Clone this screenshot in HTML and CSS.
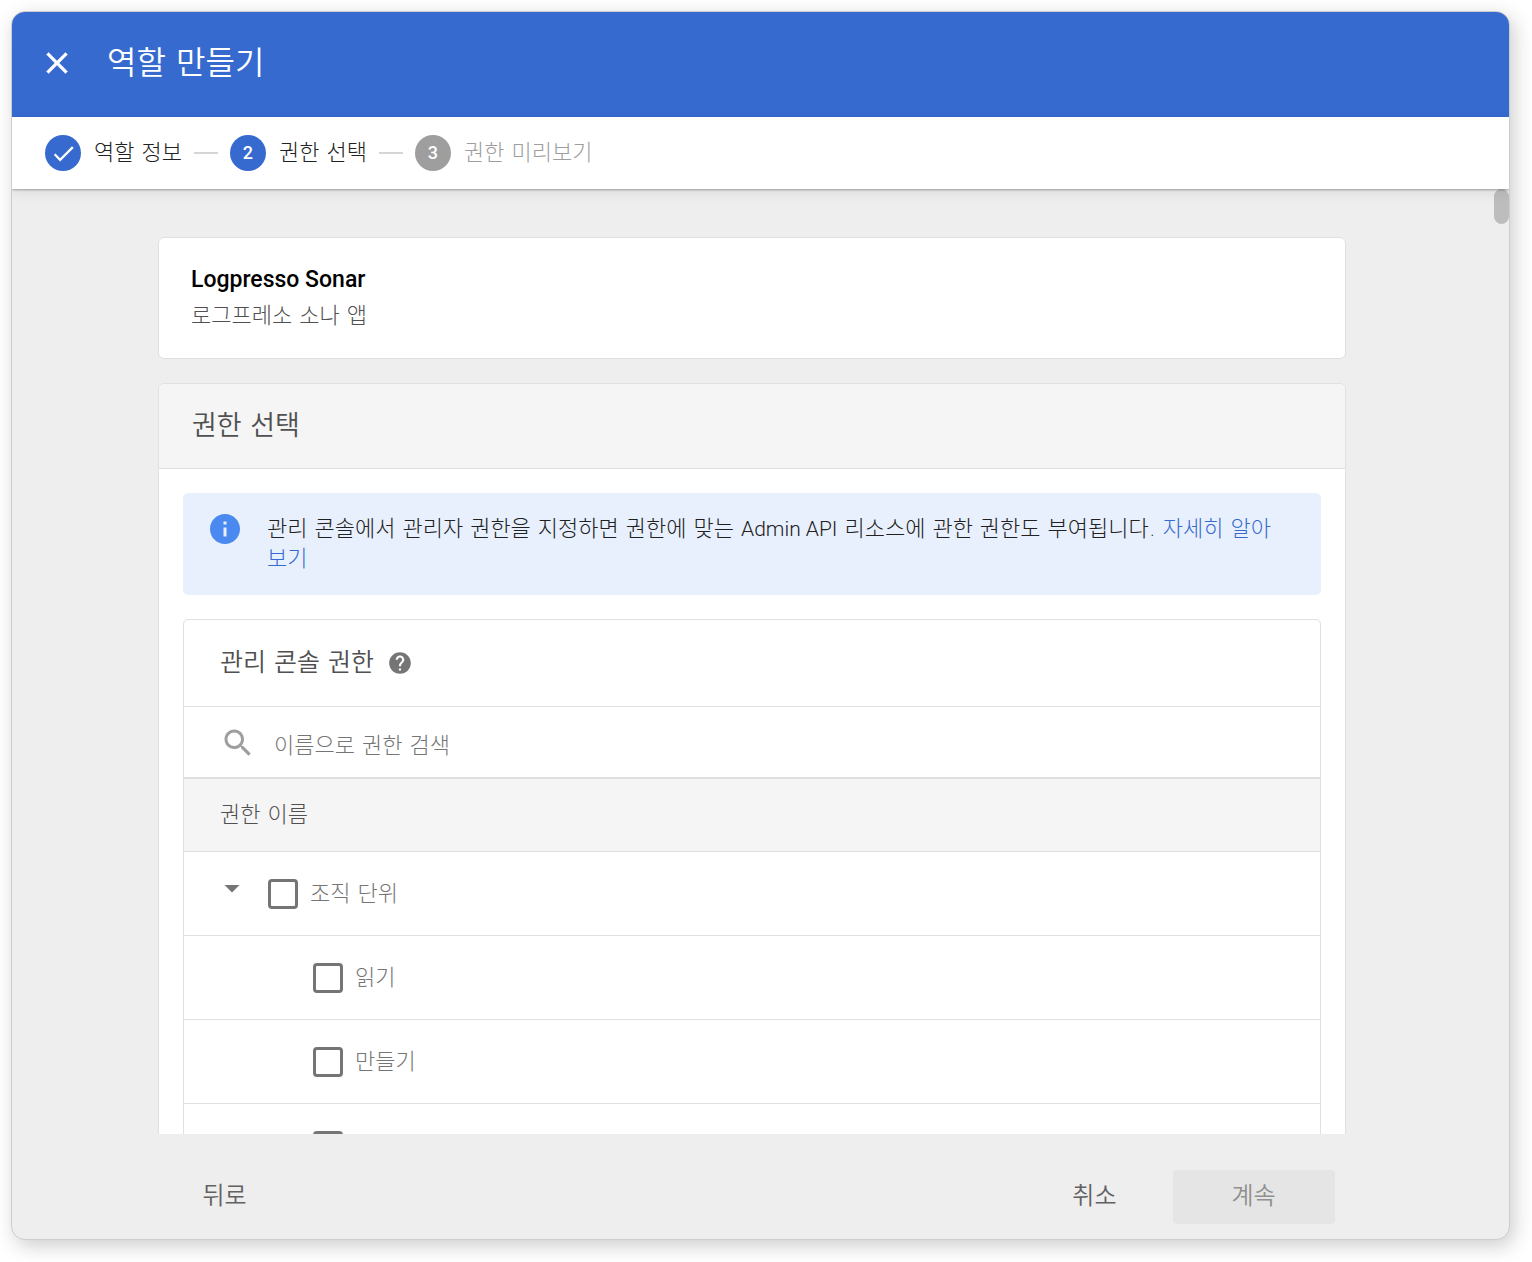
FILE: index.html
```html
<!DOCTYPE html>
<html lang="ko">
<head>
<meta charset="utf-8">
<meta name="viewport" content="width=device-width, initial-scale=1">
<title>역할 만들기</title>
<link rel="stylesheet" href="styles.css">
</head>
<body>
<div class="dialog" role="dialog" aria-labelledby="dialog-title">
  <header class="dialog-header">
    <button class="close" type="button" aria-label="닫기">
      <svg class="icon close-icon" viewBox="0 0 24 24"><path d="M19 6.41L17.59 5 12 10.59 6.41 5 5 6.41 10.59 12 5 17.59 6.41 19 12 13.41 17.59 19 19 17.59 13.41 12z"/></svg>
    </button>
    <h1 class="dialog-title" id="dialog-title">역할 만들기</h1>
  </header>

  <ol class="steps">
    <li class="step">
      <span class="step-badge"><svg class="step-check" viewBox="0 0 24 24"><path d="M9 16.17L4.83 12l-1.42 1.41L9 19 21 7l-1.41-1.41z"/></svg></span>
      <span class="step-label">역할 정보</span>
    </li>
    <li class="step">
      <span class="step-badge">2</span>
      <span class="step-label">권한 선택</span>
    </li>
    <li class="step step-pending">
      <span class="step-badge">3</span>
      <span class="step-label">권한 미리보기</span>
    </li>
  </ol>

  <main class="content">
    <div class="scroll-thumb"></div>
    <div class="column">
      <section class="card role-card">
        <h2 class="role-name">Logpresso Sonar</h2>
        <p class="role-description">로그프레소 소나 앱</p>
      </section>

      <section class="card">
        <h2 class="card-title">권한 선택</h2>
        <div class="card-body">
          <div class="notice">
            <svg class="icon notice-icon" viewBox="0 0 24 24"><path d="M12 2C6.48 2 2 6.48 2 12s4.480 10 10 10 10-4.480 10-10S17.520 2 12 2zm1 15h-2v-6h2v6zm0-8h-2V7h2v2z"/></svg>
            <p class="notice-text">관리 콘솔에서 관리자 권한을 지정하면 권한에 맞는 <span class="latin">Admin API</span> 리소스에 관한 권한도 부여됩니다. <a class="link" href="#">자세히 알아보기</a></p>
          </div>

          <div class="panel">
            <div class="panel-header">
              <h3 class="panel-title">관리 콘솔 권한</h3>
              <svg class="help-icon" viewBox="0 0 24 24"><path d="M12 2C6.480 2 2 6.480 2 12s4.480 10 10 10 10-4.480 10-10S17.520 2 12 2zm1 17h-2v-2h2v2zm2.070-7.750l-.9.920C13.450 12.900 13 13.500 13 15h-2v-.5c0-1.100.45-2.100 1.170-2.830l1.240-1.260c.37-.36.59-.86.59-1.410 0-1.100-.9-2-2-2s-2 .9-2 2H8c0-2.210 1.790-4 4-4s4 1.790 4 4c0 .88-.36 1.680-.93 2.250z"/></svg>
            </div>
            <label class="search">
              <svg class="icon search-icon" viewBox="0 0 24 24"><path d="M15.500 14h-.79l-.28-.27C15.410 12.590 16 11.110 16 9.500 16 5.910 13.090 3 9.500 3S3 5.910 3 9.500 5.910 16 9.500 16c1.610 0 3.090-.59 4.230-1.570l.27.28v.79l5 4.990L20.490 19l-4.990-5zm-6 0C7.010 14 5 11.990 5 9.500S7.010 5 9.500 5 14 7.010 14 9.500 11.990 14 9.500 14z"/></svg>
              <input class="search-input" type="text" placeholder="이름으로 권한 검색" aria-label="이름으로 권한 검색">
            </label>
            <table class="permissions">
              <thead>
                <tr><th scope="col">권한 이름</th></tr>
              </thead>
              <tbody>
                <tr><td>
                  <div class="row">
                    <button class="toggle" type="button" aria-label="접기" aria-expanded="true"><svg class="icon" viewBox="0 0 24 24"><path d="M7 10l5 5 5-5z"/></svg></button>
                    <label class="option"><input class="checkbox" type="checkbox">조직 단위</label>
                  </div>
                </td></tr>
                <tr><td>
                  <div class="row row-child"><label class="option"><input class="checkbox" type="checkbox">읽기</label></div>
                </td></tr>
                <tr><td>
                  <div class="row row-child"><label class="option"><input class="checkbox" type="checkbox">만들기</label></div>
                </td></tr>
                <tr><td>
                  <div class="row row-child"><label class="option"><input class="checkbox" type="checkbox" aria-label="권한"></label></div>
                </td></tr>
              </tbody>
            </table>
          </div>
        </div>
      </section>
    </div>
  </main>

  <footer class="actions">
    <button class="button" type="button">뒤로</button>
    <div class="actions-end">
      <button class="button" type="button">취소</button>
      <button class="button button-primary" type="button" disabled>계속</button>
    </div>
  </footer>
</div>
</body>
</html>
```
FILE: styles.css
```css
* {
  box-sizing: border-box;
}

body {
  margin: 0;
  height: 100vh;
  padding: 11px 22px 22px 11px;
  background: #fff;
  color: #212121;
  font-family: "DejaVu Sans", "Noto Sans CJK KR", sans-serif;
  font-size: 22px;
  font-weight: 300;
  line-height: 30px;
}

h1, h2, h3, p, ol {
  margin: 0;
  padding: 0;
  font-weight: 300;
}

button, input {
  padding: 0;
  border: 0;
  background: none;
  color: inherit;
  font: inherit;
}

.icon {
  display: block;
  flex: none;
  width: 36px;
  height: 36px;
  fill: currentColor;
}

.dialog {
  display: flex;
  flex-direction: column;
  height: 100%;
  overflow: hidden;
  border: 1px solid #cdcdcd;
  border-radius: 14px;
  background: #eee;
  box-shadow: 4px 6px 20px rgba(0, 0, 0, 0.2);
}

.dialog-header {
  display: flex;
  flex: none;
  align-items: center;
  gap: 32px;
  height: 105px;
  padding: 0 27px 4px;
  background: #366acf;
  color: #fff;
}

.close-icon {
  stroke: currentColor;
  stroke-width: 0.3;
}

.dialog-title {
  font-size: 32px;
  font-weight: 350;
  line-height: 40px;
}

.steps {
  position: relative;
  z-index: 1;
  display: flex;
  flex: none;
  align-items: center;
  height: 72px;
  padding: 0 33px;
  background: #fff;
  box-shadow: 0 1px 2px rgba(0, 0, 0, 0.3), 0 4px 12px rgba(0, 0, 0, 0.08);
  list-style: none;
}

.step {
  display: flex;
  align-items: center;
  gap: 13px;
}

.step + .step::before {
  width: 24px;
  height: 2px;
  margin: 0 -1px 0 12px;
  background: #d6d6d6;
  content: "";
}

.step-badge {
  display: flex;
  align-items: center;
  justify-content: center;
  width: 36px;
  height: 36px;
  border-radius: 50%;
  background: #366acf;
  color: #fff;
  font-family: Roboto, sans-serif;
  font-size: 18px;
  font-weight: 500;
}

.step-check {
  width: 27px;
  height: 27px;
  fill: currentColor;
}

.step-pending {
  color: #9e9e9e;
}

.step-pending .step-badge {
  background: #9e9e9e;
}

.content {
  position: relative;
  flex: 1;
  min-height: 0;
  overflow: hidden;
  padding: 48px 17px 0 0;
}

.scroll-thumb {
  position: absolute;
  top: 0;
  right: 0;
  width: 15px;
  height: 35px;
  border-radius: 8px;
  background: #bdbdbd;
}

.column {
  display: flex;
  flex-direction: column;
  gap: 24px;
  max-width: 1188px;
  margin: 0 auto;
}

.card {
  border: 1px solid #e0e0e0;
  border-radius: 6px;
  background: #fff;
}

.role-card {
  padding: 24px 32px;
}

.role-name {
  color: #000;
  font-family: Roboto, sans-serif;
  font-size: 23px;
  font-weight: 500;
  line-height: 36px;
}

.role-description {
  color: #505050;
  line-height: 36px;
}

.card-title {
  padding: 22px 33px;
  border-bottom: 1px solid #e0e0e0;
  border-radius: 6px 6px 0 0;
  background: #f5f5f5;
  color: #505050;
  font-size: 27px;
  font-weight: 350;
  line-height: 40px;
}

.card-body {
  display: flex;
  flex-direction: column;
  gap: 24px;
  padding: 24px;
}

.notice {
  display: flex;
  align-items: flex-start;
  gap: 24px;
  padding: 18px 36px 21px 24px;
  border-radius: 5px;
  background: #e8f0fd;
}

.notice-icon {
  color: #4a8af0;
}

.notice-text {
  padding-top: 3px;
  word-break: break-all;
}

.latin {
  font-family: Roboto, sans-serif;
  font-size: 21px;
}

.link {
  color: #366acf;
  text-decoration: none;
}

.panel {
  border: 1px solid #e0e0e0;
  border-radius: 5px;
}

.panel-header {
  display: flex;
  align-items: center;
  gap: 13px;
  height: 87px;
  padding: 0 36px;
  border-bottom: 1px solid #e0e0e0;
}

.panel-title {
  color: #505050;
  font-size: 25px;
  font-weight: 350;
}

.help-icon {
  width: 26px;
  height: 26px;
  fill: #757575;
}

.search {
  display: flex;
  align-items: center;
  gap: 18px;
  height: 72px;
  padding: 2px 36px 0;
  border-bottom: 2px solid #e0e0e0;
}

.search-icon {
  color: #9e9e9e;
}

.search-input {
  flex: 1;
  padding-top: 6px;
  outline: 0;
}

.search-input::placeholder {
  color: #757575;
}

.permissions {
  width: 100%;
  border-collapse: separate;
  border-spacing: 0;
  color: #757575;
}

.permissions th {
  height: 73px;
  padding: 0 36px;
  border-bottom: 1px solid #e0e0e0;
  background: #f5f5f5;
  color: #505050;
  font-weight: 300;
  text-align: left;
}

.permissions td {
  height: 84px;
  padding: 0;
  border-bottom: 1px solid #e0e0e0;
}

.row {
  display: flex;
  align-items: center;
  gap: 18px;
  padding-left: 30px;
}

.row-child {
  padding-left: 129px;
}

.toggle {
  padding-bottom: 12px;
}

.option {
  display: flex;
  align-items: center;
  gap: 12px;
}

.checkbox {
  width: 30px;
  height: 30px;
  margin: 0;
  border: 3px solid #757575;
  border-radius: 4px;
  appearance: none;
}

.actions {
  display: flex;
  flex: none;
  align-items: center;
  justify-content: space-between;
  width: 100%;
  max-width: 1188px;
  height: 105px;
  margin: 0 auto;
  padding: 20px 20px 0;
  color: #616161;
}

.actions-end {
  display: flex;
  gap: 40px;
}

.button {
  height: 54px;
  padding: 0 16px 2px;
  border-radius: 4px;
  font-size: 24px;
  font-weight: 350;
}

.button-primary {
  width: 162px;
  background: #e5e5e5;
  color: #909090;
}
```
